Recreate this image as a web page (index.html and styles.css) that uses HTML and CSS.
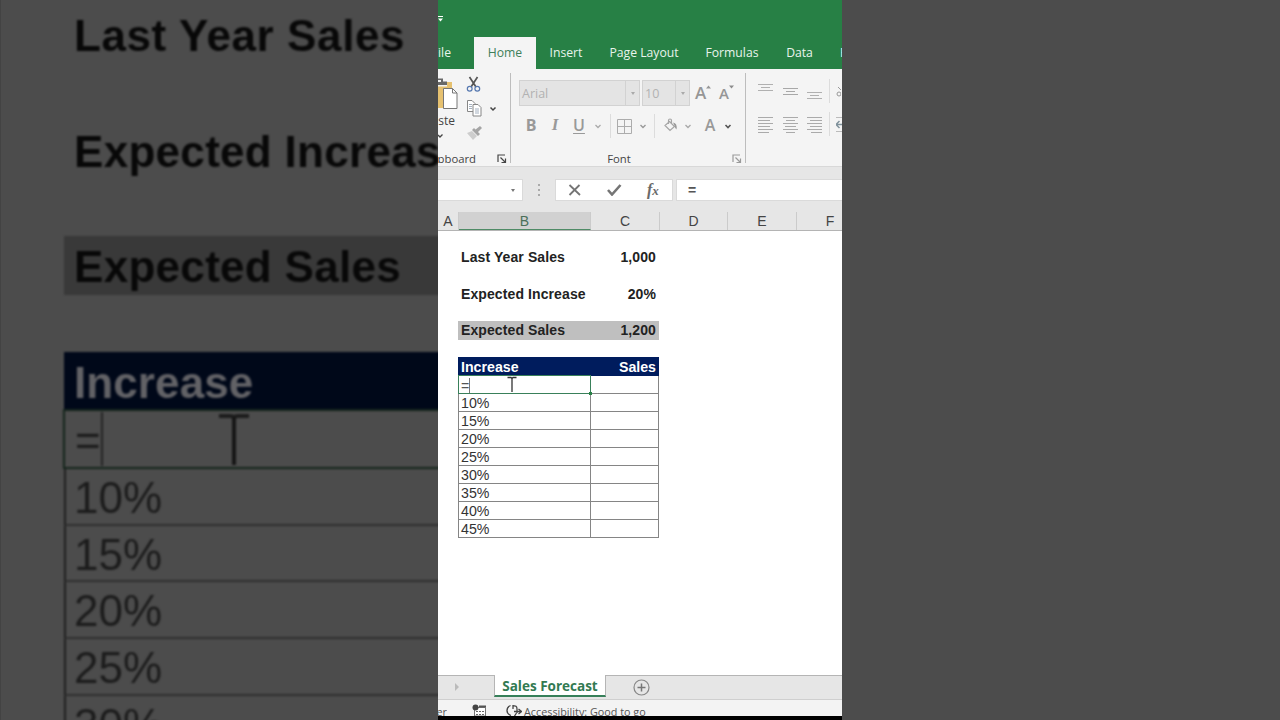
FILE: index.html
```html
<!DOCTYPE html>
<html lang="en">
<head>
  <meta charset="UTF-8">
  <meta name="viewport" content="width=device-width, initial-scale=1.0">
  <title>Sales Forecast</title>
  <link rel="stylesheet" href="styles.css">
</head>
<body>
  <div class="stage">
    <div class="side side-left">
      <div class="zoomed">
        <div class="big-row strong wide">Last Year Sales</div>
        <div class="big-row"></div>
        <div class="big-row strong">Expected Increase</div>
        <div class="big-row short"></div>
        <div class="big-row strong band">Expected Sales</div>
        <div class="big-row gap"></div>
        <div class="big-row strong head">Increase</div>
        <div class="big-row editing">
          <span class="big-equals">=</span>
          <svg class="big-cursor" width="32" height="56" viewBox="0 0 32 56"><path d="M1 5h11q4 0 4 3q0-3 4-3h11" fill="none" stroke="#1c1c1c" stroke-width="4"/><path d="M16 6v48" stroke="#161616" stroke-width="4"/></svg>
        </div>
        <div class="big-row line">10%</div>
        <div class="big-row line">15%</div>
        <div class="big-row line">20%</div>
        <div class="big-row line">25%</div>
        <div class="big-row line">30%</div>
      </div>
    </div>

    <div class="app">
      <div class="titlebar">
        <svg width="6" height="8" viewBox="0 0 6 8"><path d="M0 1.500h5" stroke="#fff"/><path d="M0 3.500h5L2.500 6.500z" fill="#fff"/></svg>
      </div>
      <div class="tabs">
        <div class="tab file"><span>File</span></div>
        <div class="tab active">Home</div>
        <div class="tab insert">Insert</div>
        <div class="tab layout">Page Layout</div>
        <div class="tab formulas">Formulas</div>
        <div class="tab data">Data</div>
        <div class="tab review">Review</div>
      </div>

      <div class="ribbon">
        <div class="group clipboard">
          <div class="clip-body">
            <div class="paste">
              <svg width="20" height="36" viewBox="0 0 20 36">
                <path d="M0 7h14v26H0z" fill="#e6c170"/>
                <path d="M0 6.500h9v5H0z" fill="#f3f3f3"/>
                <path d="M0 3.500h5v3h4V10H0z" fill="#686868"/>
                <path d="M0 5h3v2H0z" fill="#f3f3f3"/>
                <path d="M5.500 13.500h9l4.500 4.500v15.500h-13.500z" fill="#fff" stroke="#777"/>
                <path d="M14.500 13.500v4.500h4.500" fill="none" stroke="#777"/>
              </svg>
              <div class="paste-text"><span>Paste</span></div>
              <svg class="paste-arrow" width="6" height="6" viewBox="0 0 6 6"><path d="M0 2l2 2 2.500-2.500" fill="none" stroke="#444" stroke-width="1.300"/></svg>
            </div>
            <div class="clip-tools">
              <svg width="16" height="17" viewBox="0 0 16 17"><path d="M3.500 1l6.500 10M11.500 1L5 11" stroke="#555" stroke-width="1.700"/><circle cx="3.700" cy="12.700" r="2.400" fill="none" stroke="#5678b0" stroke-width="1.200"/><circle cx="11.300" cy="12.700" r="2.400" fill="none" stroke="#5678b0" stroke-width="1.200"/></svg>
              <div class="copy">
                <svg width="16" height="17" viewBox="0 0 16 17"><g fill="#fff" stroke="#868686"><path d="M1.500 .500h4.500l3 3v8h-7.500z"/><path d="M7 4.500h5l3 3v8.500H7z"/></g><path d="M3 4.500h3M3 6.500h3M3 8.500h3M9 9h4M9 11h4M9 13h4" stroke="#8e9daf" stroke-width=".8"/></svg>
                <svg width="8" height="6" viewBox="0 0 8 6"><path d="M1.500 1.500L4 4l2.500-2.500" fill="none" stroke="#444" stroke-width="1.500"/></svg>
              </div>
              <svg width="17" height="16" viewBox="0 0 17 16"><path d="M1 9l5-2 5 5-4 4z" fill="#cdcdcd"/><path d="M6 6l2-2 6 6-2 2zM9 6l5-4 2 2-4 4z" fill="#a5a5a5"/></svg>
            </div>
          </div>
          <div class="group-label"><span>Clipboard</span>
            <svg width="10" height="10" viewBox="0 0 10 10"><path d="M1 8V1h7M3.500 3.500L8 8M8.500 4.500v4h-4" fill="none" stroke="#444" stroke-width="1.200"/></svg>
          </div>
        </div>

        <div class="group font">
          <div class="font-row">
            <div class="combo face"><span>Arial</span><i></i></div>
            <div class="combo size"><span>10</span><i></i></div>
            <div class="grow">A<svg width="5" height="4" viewBox="0 0 5 4"><path d="M0 3.500L2.500.500 5 3.500z" fill="#969696"/></svg></div>
            <div class="shrink">A<svg width="5" height="4" viewBox="0 0 5 4"><path d="M0 .500h5L2.500 3.500z" fill="#8c8c8c"/></svg></div>
          </div>
          <div class="style-row">
            <span class="btn bold">B</span>
            <span class="btn italic">I</span>
            <span class="btn under">U</span>
            <svg class="chev first" width="8" height="8" viewBox="0 0 8 8"><path d="M1.500 3L4 5.500 6.500 3" fill="none" stroke="#aaa" stroke-width="1.300"/></svg>
            <span class="sep"></span>
            <svg class="grid-icon" width="15" height="15" viewBox="0 0 15 15"><path d="M.500.500h14v14H.500zM7.500.500v14M.500 7.500h14" fill="none" stroke="#acacac"/></svg>
            <svg class="chev" width="8" height="8" viewBox="0 0 8 8"><path d="M1.500 3L4 5.500 6.500 3" fill="none" stroke="#999" stroke-width="1.400"/></svg>
            <span class="sep second"></span>
            <svg class="bucket" width="14" height="14" viewBox="0 0 14 14"><path d="M5.500 3.500l5 5-4.500 4-5-5zM4.500 6V2.500q0-1.500 1.500-1.500t1.500 1.500v3" fill="none" stroke="#a5a5a5" stroke-width="1.200"/><path d="M9 4.500q4.500.500 3.500 7-1.500-1-2-4z" fill="#999"/></svg>
            <svg class="chev" width="8" height="8" viewBox="0 0 8 8"><path d="M1.500 3L4 5.500 6.500 3" fill="none" stroke="#aaa" stroke-width="1.400"/></svg>
            <span class="btn color">A</span>
            <svg class="chev" width="8" height="8" viewBox="0 0 8 8"><path d="M1.500 3L4 5.500 6.500 3" fill="none" stroke="#555" stroke-width="1.600"/></svg>
          </div>
          <div class="group-label"><span>Font</span>
            <svg width="10" height="10" viewBox="0 0 10 10"><path d="M1 8V1h7M3.500 3.500L8 8M8.500 4.500v4h-4" fill="none" stroke="#9a9a9a" stroke-width="1.200"/></svg>
          </div>
        </div>

        <div class="group align">
          <div class="align-row">
            <svg width="15" height="20" viewBox="0 0 15 20"><path d="M0 1.500h15M3 4.500h9M0 7.500h15" stroke="#b0b0b0"/></svg>
            <svg width="15" height="20" viewBox="0 0 15 20"><path d="M0 5.500h15M3 8.500h9M0 11.500h15" stroke="#a8a8a8"/></svg>
            <svg width="15" height="20" viewBox="0 0 15 20"><path d="M0 9.500h15M3 12.500h9M0 15.500h15" stroke="#b0b0b0"/></svg>
            <span class="sep"></span>
            <svg class="cut" width="5" height="20" viewBox="0 0 5 20"><circle cx="3" cy="11" r="2" fill="none" stroke="#999"/><path d="M2 4l4 4" stroke="#999"/></svg>
          </div>
          <div class="align-row second">
            <svg width="15" height="18" viewBox="0 0 15 18"><path d="M0 1.500h15M0 4.500h12M0 7.500h15M0 10.500h12M0 13.500h15M0 16.500h11" stroke="#aaa"/></svg>
            <svg width="15" height="18" viewBox="0 0 15 18"><path d="M0 1.500h15M3 4.500h9M0 7.500h15M2 10.500h11M0 13.500h15M3 16.500h9" stroke="#aaa"/></svg>
            <svg width="15" height="18" viewBox="0 0 15 18"><path d="M0 1.500h15M3 4.500h12M0 7.500h15M3 10.500h12M0 13.500h15M4 16.500h11" stroke="#aaa"/></svg>
            <span class="sep"></span>
            <svg class="cut" width="6" height="18" viewBox="0 0 6 18"><path d="M0 1.500h6M0 15.500h6" stroke="#bbb"/><path d="M0 8.500h6M3.500 5L0 8.500 3.500 12" fill="none" stroke="#80929c" stroke-width="1.500"/></svg>
          </div>
        </div>
      </div>

      <div class="formula-bar">
        <div class="name-box"><i></i></div>
        <div class="dots"><b></b><b></b><b></b></div>
        <div class="fx-box">
          <svg width="14" height="12" viewBox="0 0 14 12"><path d="M1.500 1l10.500 10M11.500 1L1.500 11" stroke="#757575" stroke-width="1.800"/></svg>
          <svg width="15" height="12" viewBox="0 0 15 12"><path d="M1 6l4 4.500L13.500 1" fill="none" stroke="#757575" stroke-width="2.600"/></svg>
          <span class="fx">f<small>x</small></span>
        </div>
        <div class="formula">=</div>
      </div>

      <div class="columns">
        <div>A</div><div class="selected">B</div><div>C</div><div>D</div><div>E</div><div class="last">F</div>
      </div>

      <div class="sheet">
        <div class="summary">
          <div class="row"><span>Last Year Sales</span><span>1,000</span></div>
          <div class="row blank"></div>
          <div class="row"><span>Expected Increase</span><span>20%</span></div>
          <div class="row blank"></div>
          <div class="row band"><span>Expected Sales</span><span>1,200</span></div>
        </div>
        <table class="forecast">
          <thead>
            <tr><th>Increase</th><th>Sales</th></tr>
          </thead>
          <tbody>
            <tr><td class="edit"><span>=</span>
              <svg class="cursor" width="10" height="17" viewBox="0 0 10 17"><path d="M.500 1.500H4L5 2.500 6 1.500h3.500M5 2.500V16" fill="none" stroke="#333" stroke-width="1.300"/></svg>
              <i class="handle"></i></td><td></td></tr>
            <tr><td>10%</td><td></td></tr>
            <tr><td>15%</td><td></td></tr>
            <tr><td>20%</td><td></td></tr>
            <tr><td>25%</td><td></td></tr>
            <tr><td>30%</td><td></td></tr>
            <tr><td>35%</td><td></td></tr>
            <tr><td>40%</td><td></td></tr>
            <tr><td>45%</td><td></td></tr>
          </tbody>
        </table>
      </div>

      <div class="sheet-tabs">
        <svg class="next" width="6" height="8" viewBox="0 0 6 8"><path d="M1 0l4 4-4 4z" fill="#bbb"/></svg>
        <div class="sheet-tab">Sales Forecast</div>
        <svg class="add" width="17" height="17" viewBox="0 0 17 17"><circle cx="8.500" cy="8.500" r="7.500" fill="none" stroke="#888" stroke-width="1.200"/><path d="M8.500 4.500v8M4.500 8.500h8" stroke="#777" stroke-width="1.500"/></svg>
      </div>
      <div class="status">
        <div class="mode"><span>Enter</span></div>
        <svg class="macro" width="15" height="12" viewBox="0 0 15 12"><path d="M2.500 3.500h11V12h-11z" fill="#fff" stroke="#777"/><path d="M7 2.500h7" stroke="#555" stroke-width="2"/><path d="M4 7.500h2M7 7.500h2M10 7.500h2M4 10.500h2M7 10.500h2M10 10.500h2" stroke="#666"/><circle cx="3.500" cy="3.500" r="3" fill="#444"/></svg>
        <svg class="access" width="16" height="12" viewBox="0 0 16 12"><path d="M4.500 1.500Q1 3 1 6.500t4 5M7 2q4-1 4 3v4M7 1v4M8 7.500h7M12.500 5l3 2.500-3 2.500M10.500 9l-2 3" fill="none" stroke="#444" stroke-width="1.300"/></svg>
        <span>Accessibility: Good to go</span>
      </div>
      <div class="bottom"></div>
    </div>

    <div class="side"></div>
  </div>
</body>
</html>
```
FILE: styles.css
```css
* {
  box-sizing: border-box;
}

body {
  margin: 0;
  background: #4c4c4c;
  font-family: "Liberation Sans", Arial, sans-serif;
}

svg {
  display: block;
  flex: none;
}

.stage {
  display: grid;
  grid-template-columns: 438px 404px 438px;
  width: 1280px;
  height: 720px;
  overflow: hidden;
}

.side {
  height: 720px;
  background: #4c4c4c;
  overflow: hidden;
}

/* enlarged sheet behind the window */
.side-left {
  border-left: 1px solid #434343;
}

.zoomed {
  width: 460px;
  padding: 7px 0 0 63px;
  filter: blur(0.8px);
}

.big-row {
  display: flex;
  align-items: center;
  height: 58px;
  padding-left: 10px;
  font-size: 44px;
  line-height: 1;
  color: #1c1c1c;
  white-space: nowrap;
}

.big-row.strong {
  font-weight: bold;
  color: #080808;
  letter-spacing: 0.3px;
}

.big-row.wide {
  letter-spacing: 0.6px;
}

.big-row.short {
  height: 55px;
}

.big-row.band {
  height: 59px;
  padding-top: 3px;
  background: #393939;
}

.big-row.gap {
  height: 57px;
}

.big-row.head {
  height: 57px;
  padding-top: 5px;
  background: #000819;
  color: #626266;
  letter-spacing: 0.1px;
}

.big-row.editing {
  height: 60px;
  margin-left: -1px;
  border: 2px solid #15251c;
}

.big-equals {
  width: 28px;
  height: 54px;
  border-right: 2px solid #252525;
  line-height: 58px;
}

.big-cursor {
  margin-left: 115px;
}

.big-row.line {
  height: 56.7px;
  padding-top: 3px;
  border-left: 2px solid #202020;
  border-bottom: 2px solid #303030;
  padding-left: 8px;
}

/* window */
.app {
  display: flex;
  flex-direction: column;
  height: 720px;
  background: #fff;
  overflow: hidden;
}

.titlebar {
  height: 37px;
  padding: 15px 0 0;
  background: #278045;
}

.tabs {
  display: flex;
  height: 32px;
  background: #278045;
  color: #e9f4ec;
  font: 500 12.2px/31px "Open Sans", "Noto Sans", sans-serif;
  white-space: nowrap;
  overflow: hidden;
}

.tab {
  flex: none;
  text-align: center;
}

.tab.file {
  display: flex;
  justify-content: flex-end;
  width: 13px;
  margin-right: 23px;
}

.tab.active {
  width: 62px;
  background: #f4f4f4;
  color: #40805a;
}

.tab.insert {
  width: 60px;
}

.tab.layout {
  width: 96px;
}

.tab.formulas {
  width: 80px;
}

.tab.data {
  width: 55px;
}

.tab.review {
  margin-left: 13px;
}

.ribbon {
  display: grid;
  grid-template-columns: 73px 235px 96px;
  height: 98px;
  padding-top: 4px;
  background: #f4f4f4;
  border-bottom: 1px solid #d8d8d8;
  font-family: "Open Sans", "Noto Sans", sans-serif;
  font-size: 12px;
  color: #444;
}

.group {
  height: 90px;
  border-right: 1px solid #bdbdbd;
  overflow: hidden;
}

.group.align {
  border-right: 0;
}

.clip-body {
  display: flex;
  height: 76px;
}

.paste {
  width: 20px;
  padding-top: 2px;
}

.paste-text {
  display: flex;
  justify-content: flex-end;
  width: 17px;
  line-height: 20px;
  overflow: hidden;
}

.paste-arrow {
  margin-top: 2px;
}

.clip-tools {
  display: flex;
  flex-direction: column;
  gap: 7px;
  padding: 3px 0 0 8px;
}

.copy {
  display: flex;
  align-items: center;
  gap: 7px;
}

.group-label {
  display: flex;
  align-items: center;
  height: 20px;
  font-size: 11.3px;
  line-height: 20px;
}

.clipboard .group-label {
  justify-content: flex-end;
  padding-right: 3px;
  gap: 21px;
}

.font {
  padding-left: 8px;
}

.font .group-label {
  margin-top: 9px;
}

.font .group-label span {
  width: 200px;
  text-align: center;
}

.font .group-label svg {
  margin-left: 13px;
}

.font-row {
  display: flex;
  height: 33px;
  padding-top: 7px;
}

.combo {
  display: flex;
  justify-content: space-between;
  height: 26px;
  background: #e4e4e4;
  border: 1px solid #d2d2d2;
  color: #b2b2b2;
  font-size: 12.5px;
  line-height: 25px;
  padding-left: 2px;
}

.combo i {
  display: flex;
  justify-content: center;
  align-items: center;
  width: 14px;
  border-left: 1px solid #d2d2d2;
}

.combo i::after,
.name-box i {
  content: "";
  border: 2.5px solid transparent;
  border-top: 3px solid #aaa;
  border-bottom: 0;
}

.face {
  width: 121px;
}

.size {
  width: 48px;
  margin-left: 2px;
}

.grow,
.shrink {
  display: flex;
  color: #969696;
  font-weight: 600;
  line-height: 26px;
}

.grow {
  width: 24px;
  margin-left: 5px;
  font-size: 17px;
}

.shrink {
  font-size: 15px;
  line-height: 27px;
}

.grow svg,
.shrink svg {
  margin-top: 5px;
}

.style-row {
  display: flex;
  align-items: center;
  height: 28px;
  margin-top: 6px;
}

.btn {
  width: 24px;
  margin-top: -3px;
  text-align: center;
  font-size: 16px;
  line-height: 26px;
  color: #999;
  font-weight: 600;
}

.btn.bold {
  font-weight: bold;
}

.btn.italic {
  font-family: "Liberation Serif", serif;
  font-size: 17px;
  font-style: italic;
}

.btn.under {
  text-decoration: underline;
  text-underline-offset: 2px;
}

.btn.color {
  width: 36px;
  margin-right: -4px;
}

.chev.first {
  margin: 0 8px 0 3px;
}

.sep {
  width: 1px;
  height: 24px;
  background: #dcdcdc;
}

.grid-icon {
  margin: 0 7px 0 6px;
}

.sep.second {
  margin-left: 7px;
}

.bucket {
  margin: -3px 6px 0 9px;
}

.align {
  padding-left: 12px;
}

.align-row {
  display: flex;
  gap: 9.5px;
  height: 34px;
  padding-top: 10px;
}

.align-row .sep {
  margin: -4px -3px 0 -3px;
}

.align-row.second {
  padding-top: 9px;
}

.formula-bar {
  display: flex;
  height: 45px;
  padding: 12px 0 11px;
  background: #e6e6e6;
}

.name-box,
.fx-box,
.formula {
  height: 22px;
  background: #fff;
  border: 1px solid #dadada;
}

.name-box {
  display: flex;
  justify-content: flex-end;
  align-items: center;
  width: 85px;
  padding-right: 7px;
  border-left: 0;
}

.name-box i {
  border-top-color: #777;
}

.dots {
  display: flex;
  flex-direction: column;
  align-items: center;
  justify-content: center;
  gap: 3px;
  width: 32px;
}

.dots b {
  width: 2px;
  height: 2px;
  background: #aaa;
}

.fx-box {
  display: flex;
  align-items: center;
  width: 118px;
  padding-left: 12px;
  gap: 25px;
}

.fx {
  font: italic bold 16px/20px "Liberation Serif", serif;
  color: #6a6a6a;
}

.fx small {
  font-size: 13px;
}

.formula {
  flex: 1;
  margin-left: 3px;
  padding-left: 11px;
  border-right: 0;
  font: bold 14px/20px "Liberation Sans", Arial, sans-serif;
  color: #555;
}

.columns {
  display: grid;
  grid-template-columns: 21px 132px 69px 68px 69px 69px;
  height: 19px;
  background: #e6e6e6;
  border-bottom: 1px solid #b4b4b4;
  color: #444;
  font-size: 14px;
  line-height: 18px;
  text-align: center;
}

.columns div {
  height: 18px;
  border-right: 1px solid #cbcbcb;
}

.columns .selected {
  background: #d1d1d1;
  border-bottom: 1px solid #4f8b66;
  color: #4b7059;
}

.columns .last {
  padding-right: 2px;
}

/* cells */
.sheet {
  flex: 1;
  padding: 17px 0 0 20px;
  color: #222;
  font-size: 14px;
}

.row {
  display: flex;
  justify-content: space-between;
  width: 201px;
  height: 19px;
  padding: 0 3px;
  font-weight: bold;
  line-height: 19px;
  letter-spacing: 0.1px;
}

.row.blank {
  height: 17.5px;
}

.row.band {
  background: #bfbfbf;
}

.forecast {
  width: 201px;
  margin-top: 17px;
  border-collapse: collapse;
  table-layout: fixed;
}

.forecast th,
.forecast td {
  height: 18px;
  padding: 1px 2px 0;
  text-align: left;
  font-size: 14.2px;
  line-height: 16px;
  color: #333;
  border: 1px solid #858585;
}

.forecast th {
  background: #001c5d;
  border-color: #001c5d;
  color: #fff;
}

.forecast th:first-child {
  width: 132px;
}

.forecast th:last-child {
  text-align: right;
}

.forecast td.edit {
  position: relative;
}

/* active cell frame, drawn over the grid lines */
.edit::before {
  content: "";
  position: absolute;
  inset: -1px;
  border: 1px solid #39805a;
}

.edit span {
  display: block;
  width: 9px;
  height: 15px;
  border-right: 1px solid #777;
  color: #555;
}

.cursor {
  position: absolute;
  left: 48px;
  top: 0;
}

.handle {
  position: absolute;
  right: -2px;
  bottom: -2px;
  width: 3px;
  height: 3px;
  background: #278045;
}

.sheet-tabs {
  display: flex;
  height: 25px;
  background: #e6e6e6;
  border-top: 1px solid #b5b5b5;
  border-bottom: 1px solid #cfcfcf;
}

.next {
  margin: 7px 34px 0 16px;
}

.sheet-tab {
  width: 112px;
  height: 22px;
  margin-top: -1px;
  background: #fff;
  border: 1px solid #b5b5b5;
  border-top: 0;
  border-bottom: 2px solid #37805a;
  color: #327a52;
  font: bold 13.5px/22px "Open Sans", "Noto Sans", sans-serif;
  text-align: center;
}

.add {
  margin: 3px 0 0 27px;
}

.status {
  display: flex;
  height: 16px;
  padding-top: 4px;
  background: #f3f3f3;
  color: #555;
  font: 10.8px/16px "Open Sans", "Noto Sans", sans-serif;
  white-space: nowrap;
  overflow: hidden;
}

.mode {
  display: flex;
  justify-content: flex-end;
  width: 9px;
  overflow: hidden;
}

.macro {
  margin-left: 25px;
}

.access {
  margin: 0 2px 0 19px;
}

.bottom {
  height: 4px;
  background: #000;
}
```
